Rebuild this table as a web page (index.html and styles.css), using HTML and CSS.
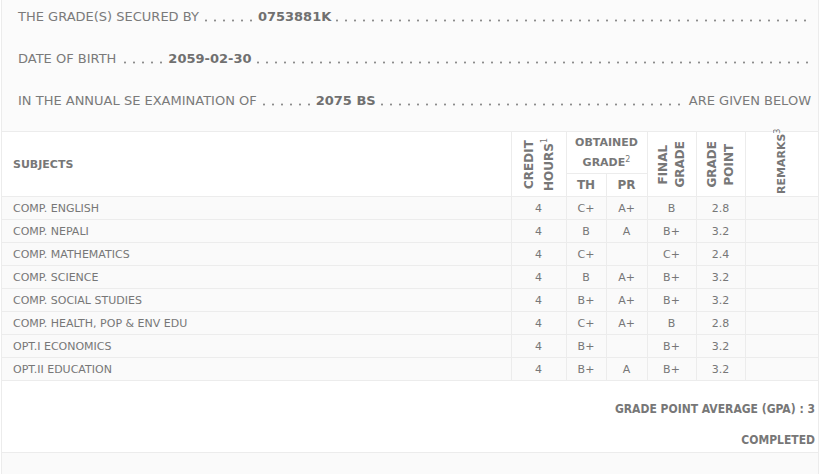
FILE: index.html
```html
<!DOCTYPE html>
<html>
<head>
<meta charset="utf-8">
<link rel="stylesheet" href="styles.css">
</head>
<body>
<div class="sheet">
  <div class="intro">
    <div class="line">
      <span class="lbl">THE GRADE(S) SECURED BY</span>
      <span class="dots d6">&nbsp;</span>
      <b class="val">0753881K</b>
      <span class="dots fill">&nbsp;</span>
    </div>
    <div class="line">
      <span class="lbl">DATE OF BIRTH</span>
      <span class="dots d5">&nbsp;</span>
      <b class="val">2059-02-30</b>
      <span class="dots fill">&nbsp;</span>
    </div>
    <div class="line">
      <span class="lbl">IN THE ANNUAL SE EXAMINATION OF</span>
      <span class="dots d6">&nbsp;</span>
      <b class="val">2075 BS</b>
      <span class="dots fill">&nbsp;</span>
      <span class="tail">ARE GIVEN BELOW</span>
    </div>
  </div>
  <table class="grades">
    <colgroup>
      <col class="c-sub"><col class="c-cr"><col class="c-th"><col class="c-pr"><col class="c-fg"><col class="c-gp"><col class="c-rm">
    </colgroup>
    <thead>
      <tr class="h1">
        <th rowspan="2" class="subj">SUBJECTS</th>
        <th rowspan="2"><div class="vert wide">CREDIT<br>HOURS<sup>1</sup></div></th>
        <th colspan="2" class="obt">OBTAINED<br>GRADE<sup>2</sup></th>
        <th rowspan="2"><div class="vert">FINAL<br>GRADE</div></th>
        <th rowspan="2"><div class="vert">GRADE<br>POINT</div></th>
        <th rowspan="2" class="rm"><div class="vert">REMARKS<sup>3</sup></div></th>
      </tr>
      <tr class="h2">
        <th>TH</th><th>PR</th>
      </tr>
    </thead>
    <tbody>
      <tr><td class="subj">COMP. ENGLISH</td><td>4</td><td>C+</td><td>A+</td><td>B</td><td>2.8</td><td></td></tr>
      <tr><td class="subj">COMP. NEPALI</td><td>4</td><td>B</td><td>A</td><td>B+</td><td>3.2</td><td></td></tr>
      <tr><td class="subj">COMP. MATHEMATICS</td><td>4</td><td>C+</td><td></td><td>C+</td><td>2.4</td><td></td></tr>
      <tr><td class="subj">COMP. SCIENCE</td><td>4</td><td>B</td><td>A+</td><td>B+</td><td>3.2</td><td></td></tr>
      <tr><td class="subj">COMP. SOCIAL STUDIES</td><td>4</td><td>B+</td><td>A+</td><td>B+</td><td>3.2</td><td></td></tr>
      <tr><td class="subj">COMP. HEALTH, POP &amp; ENV EDU</td><td>4</td><td>C+</td><td>A+</td><td>B</td><td>2.8</td><td></td></tr>
      <tr><td class="subj">OPT.I ECONOMICS</td><td>4</td><td>B+</td><td></td><td>B+</td><td>3.2</td><td></td></tr>
      <tr><td class="subj">OPT.II EDUCATION</td><td>4</td><td>B+</td><td>A</td><td>B+</td><td>3.2</td><td></td></tr>
    </tbody>
  </table>
  <div class="summary">
    <div class="gpa">GRADE POINT AVERAGE (GPA) : 3</div>
    <div class="status">COMPLETED</div>
  </div>
  <div class="notes"></div>
</div>
</body>
</html>
```
FILE: styles.css
```css
html, body {
  margin: 0;
  padding: 0;
  background: #ffffff;
}
body {
  font-family: "DejaVu Sans", Verdana, sans-serif;
  color: #777777;
}
.sheet {
  width: 818px;
  margin-left: 1px;
  border-left: 1px solid #ececec;
  border-right: 1px solid #ececec;
  box-sizing: border-box;
}
.intro {
  background: #fbfbfb;
  padding: 8px 7px 0 16px;
  height: 131px;
  box-sizing: border-box;
}
.line {
  display: flex;
  align-items: baseline;
  white-space: nowrap;
  height: 42px;
  line-height: 18px;
  font-family: "DejaVu Sans", Verdana, sans-serif;
  font-size: 13px;
  color: #7a7a7a;
}
.lbl { flex: none; }
.val {
  flex: none;
  font-weight: bold;
  color: #707070;
  margin-left: 4px;
}
.dots {
  height: 18px;
  background-image: radial-gradient(circle at 2px 12.5px, #8c8c8c 0.8px, rgba(140,140,140,0) 1.3px);
  background-size: 9px 18px;
  background-repeat: repeat-x;
  margin-left: 5px;
}
.d6 { flex: none; width: 50px; }
.d5 { flex: none; width: 41px; margin-left: 7px; }
.fill {
  flex: 1;
  min-width: 0;
  margin-left: 4px;
}
.tail { flex: none; margin-left: 3px; }
.grades {
  width: 100%;
  border-collapse: collapse;
  table-layout: fixed;
  font-size: 11px;
}
.c-sub { width: 509px; }
.c-cr { width: 55px; }
.c-th { width: 40px; }
.c-pr { width: 41px; }
.c-fg { width: 49px; }
.c-gp { width: 49px; }
.c-rm { width: auto; }
.grades th, .grades td {
  border: 1px solid #ececec;
  text-align: center;
  padding: 0;
  color: #777777;
}
.grades tr > :first-child { border-left: none; }
.grades tr > :last-child { border-right: none; }
.grades th {
  font-weight: bold;
  background: #ffffff;
}
.h1 th { height: 41px; }
.h2 th { height: 22px; font-size: 12px; }
.grades th.subj {
  text-align: left;
  padding-left: 11px;
  font-size: 11px;
}
.obt {
  font-size: 11px;
  line-height: 20px;
  vertical-align: middle;
}
.vert {
  writing-mode: vertical-rl;
  transform: rotate(180deg);
  font-size: 12px;
  line-height: 17px;
  margin: 0 auto;
  text-align: center;
  white-space: nowrap;
}
.vert.wide { line-height: 20px; }
th.rm { vertical-align: top; }
th.rm .vert {
  text-align: start;
  font-size: 11px;
  line-height: 15px;
  height: 58px;
  margin-top: 4px;
}
sup { font-size: 8px; line-height: 0; vertical-align: 4px; font-weight: normal; }
.grades td {
  height: 22px;
  background: #fafafa;
  font-size: 11px;
}
.grades td.subj {
  text-align: left;
  padding-left: 11px;
}
.summary {
  height: 72px;
  box-sizing: border-box;
  border-bottom: 1px solid #ececec;
  text-align: right;
  padding: 21px 3px 0 0;
  font-family: "DejaVu Sans Condensed", "DejaVu Sans", sans-serif;
  font-weight: bold;
  font-size: 12px;
  color: #777777;
}
.gpa { height: 31px; }
.notes {
  height: 30px;
  background: #fafafa;
}
```
